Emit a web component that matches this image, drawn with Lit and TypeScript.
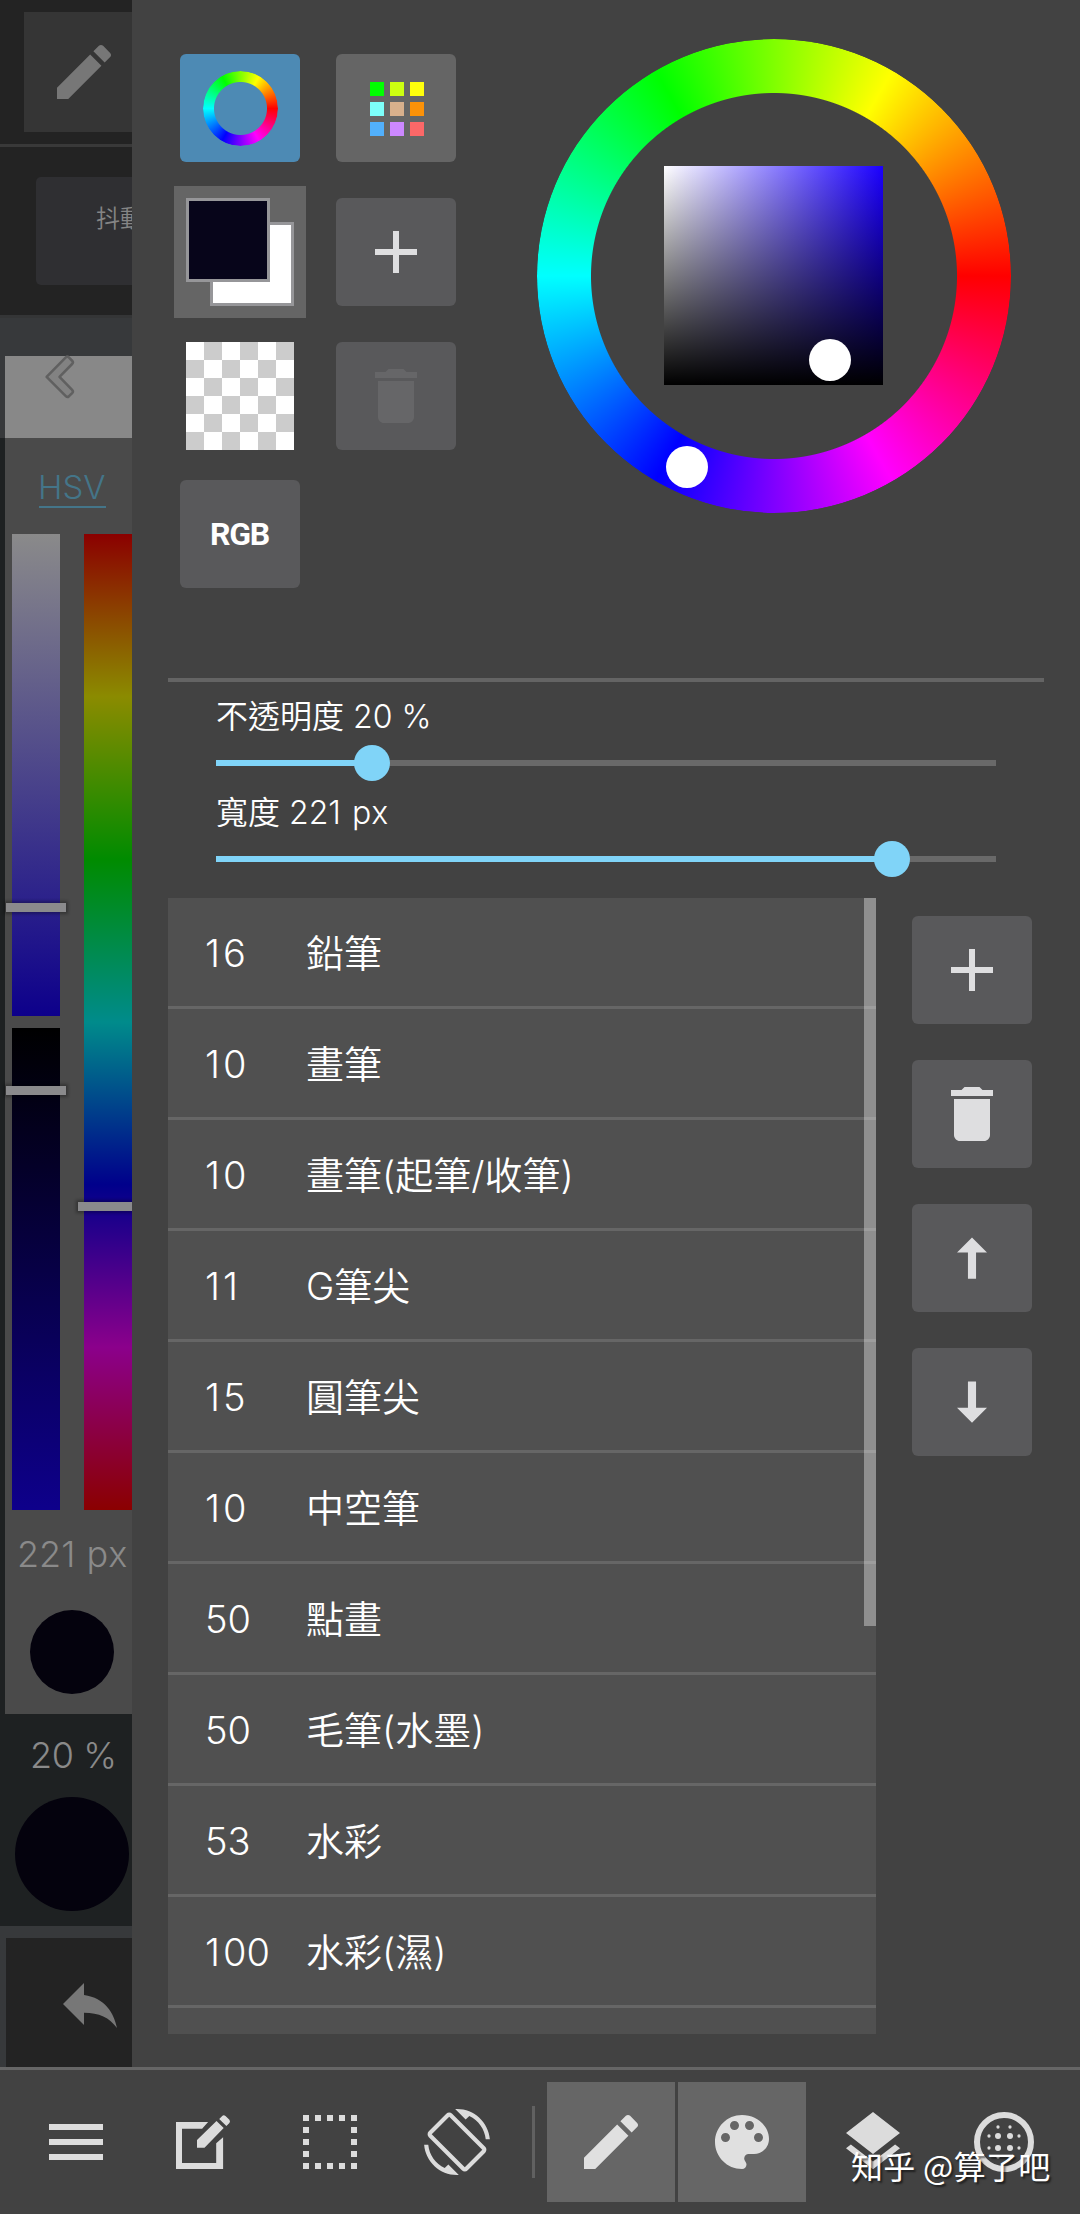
import { LitElement, html, css, svg } from "lit";
import { customElement, property } from "lit/decorators.js";
import { classMap } from "lit/directives/class-map.js";

const ICONS: Record<string, unknown> = {
  pencil: svg`<path d="M3 17.25V21h3.75L17.81 9.94l-3.75-3.75L3 17.25zM20.71 7.04c.39-.39.39-1.02 0-1.41l-2.34-2.34c-.39-.39-1.02-.39-1.41 0l-1.83 1.83 3.75 3.75 1.83-1.83z"/>`,
  plus: svg`<path d="M19 13h-6v6h-2v-6H5v-2h6V5h2v6h6v2z"/>`,
  trash: svg`<path d="M6 19c0 1.1.9 2 2 2h8c1.1 0 2-.9 2-2V7H6v12zM19 4h-3.5l-1-1h-5l-1 1H5v2h14V4z"/>`,
  up: svg`<path d="M12 5.2l5 5h-3.65v8.7h-2.7v-8.7H7z"/>`,
  down: svg`<path d="M12 18.9l5-5h-3.65V5.2h-2.7v8.7H7z"/>`,
  undo: svg`<path d="M10 9V5l-7 7 7 7v-4.1c5 0 8.5 1.6 11 5.1-1-5-4-10-11-11z"/>`,
  chevron: svg`<path class="outlined" d="M4.2 12.3L10.6 5.8Q11.1 5.3 11.6 5.8L12.8 7Q13.2 7.5 12.7 8L8.5 12.3L12.7 16.6Q13.2 17.1 12.8 17.6L11.6 18.8Q11.1 19.2 10.6 18.7Z"/>`,
  menu: svg`<path d="M3 18h18v-2H3v2zm0-5h18v-2H3v2zm0-7v2h18V6H3z"/>`,
  compose: svg`<path d="M13.7 5.3H3V21h15.7V10.4l-2.3 2V19H5V7.6h6.7zM10 13.9v-2.6L16.5 5l2.4 2.3-6.4 6.6zM17.4 4.3l1-1q.5-.5 1.1 0l1.3 1.3q.4.6 0 1.1l-1 1z"/>`,
  select: svg`<path d="M3 3h2v2H3zM7 3h2v2H7zM11 3h2v2h-2zM15 3h2v2h-2zM19 3h2v2h-2zM3 7h2v2H3zM19 7h2v2h-2zM3 11h2v2H3zM19 11h2v2h-2zM3 15h2v2H3zM19 15h2v2h-2zM3 19h2v2H3zM7 19h2v2H7zM11 19h2v2h-2zM15 19h2v2h-2zM19 19h2v2h-2z"/>`,
  rotate: svg`<path transform="translate(1 1) scale(.9167)" d="M16.48 2.52c3.27 1.55 5.61 4.72 5.97 8.48h1.5C23.44 4.84 18.29 0 12 0l-.66.03 3.81 3.81 1.33-1.32zm-6.25-.77c-.59-.59-1.54-.59-2.12 0L1.75 8.11c-.59.59-.59 1.54 0 2.12l12.02 12.02c.59.59 1.54.59 2.12 0l6.36-6.36c.59-.59.59-1.54 0-2.12L10.23 1.75zm4.6 19.44L2.81 9.17l6.36-6.36 12.02 12.02-6.36 6.36zm-7.31.29C4.25 19.94 1.91 16.76 1.55 13H.05C.56 19.16 5.71 24 12 24l.66-.03-3.81-3.81-1.33 1.32z"/>`,
  palette: svg`<path d="M12 3c-4.97 0-9 4.03-9 9s4.03 9 9 9c.83 0 1.5-.67 1.5-1.5 0-.39-.15-.74-.39-1.01-.23-.26-.38-.61-.38-.99 0-.83.67-1.5 1.5-1.5H16c2.76 0 5-2.24 5-5 0-4.42-4.03-8-9-8zm-5.5 9c-.83 0-1.5-.67-1.5-1.5S5.67 9 6.5 9 8 9.67 8 10.5 7.33 12 6.5 12zm3-4C8.67 8 8 7.33 8 6.5S8.67 5 9.5 5s1.5.67 1.5 1.5S10.33 8 9.5 8zm5 0c-.83 0-1.5-.67-1.5-1.5S13.67 5 14.5 5s1.5.67 1.5 1.5S15.33 8 14.5 8zm3 4c-.83 0-1.5-.67-1.5-1.5S16.67 9 17.5 9s1.5.67 1.5 1.5-.67 1.5-1.5 1.5z"/>`,
  layers: svg`<path d="M11.99 18.54l-7.37-5.73L3 14.07l9 7 9-7-1.63-1.27-7.38 5.74zM12 16l7.36-5.73L21 9l-9-7-9 7 1.63 1.27L12 16z"/>`,
  material: svg`<circle class="ring" cx="12" cy="12" r="9"/>
    <circle cx="10" cy="10" r="1"/><circle cx="14" cy="10" r="1"/><circle cx="10" cy="14" r="1"/><circle cx="14" cy="14" r="1"/>
    <circle cx="7" cy="10" r=".55"/><circle cx="7" cy="14" r=".55"/><circle cx="17" cy="10" r=".55"/><circle cx="17" cy="14" r=".55"/>
    <circle cx="10" cy="7" r=".55"/><circle cx="14" cy="7" r=".55"/><circle cx="10" cy="17" r=".55"/><circle cx="14" cy="17" r=".55"/>`,
};

/** Gives the narrow digit 1 extra room so it is spaced like its neighbours. */
const spaced = (text: string) =>
  text.split(/(1)/).filter(Boolean).map((part) => (part === "1" ? html`<span class="one">1</span>` : part));

@customElement("ui-icon")
class UiIcon extends LitElement {
  @property() name = "";
  static styles = css`
    :host { display: block; width: 72px; height: 72px; flex: none; }
    svg { display: block; width: 100%; height: 100%; fill: currentColor; overflow: visible; }
    .outlined { fill: #828282; stroke: #606060; stroke-width: 0.85; stroke-linejoin: round; }
    .ring { fill: none; stroke: currentColor; stroke-width: 2; }
  `;
  render() {
    return html`<svg viewBox="0 0 24 24">${ICONS[this.name]}</svg>`;
  }
}

@customElement("value-slider")
class ValueSlider extends LitElement {
  @property() label = "";
  @property({ type: Number }) percent = 0;
  static styles = css`
    :host { display: flex; flex-direction: column; height: 96px; }
    .label {
      height: 66px; color: #fff; white-space: nowrap; padding-top: 2px; box-sizing: border-box;
      font: 350 32px/66px Inter, "Noto Sans CJK TC", sans-serif; font-kerning: none;
    }
    .one { letter-spacing: 2px; }
    .track { position: relative; height: 6px; margin-top: 12px; background: #696969; }
    .fill { height: 6px; background: #80d4f8; }
    .thumb {
      position: absolute; top: -15px; width: 36px; height: 36px; margin-left: -18px;
      border-radius: 50%; background: #80d4f8;
    }
  `;
  render() {
    return html`
      <div class="label">${spaced(this.label)}</div>
      <div class="track">
        <div class="fill" style="width:${this.percent}%"></div>
        <div class="thumb" style="left:${this.percent}%"></div>
      </div>`;
  }
}

@customElement("color-wheel")
class ColorWheel extends LitElement {
  static styles = css`
    :host { display: block; }
    .wheel { position: relative; width: 474px; height: 474px; display: grid; place-items: center; }
    .hue {
      position: absolute; inset: 0; border-radius: 50%;
      background: conic-gradient(from 90deg, #f00, #f0f, #00f, #0ff, #0f0, #ff0, #f00);
      -webkit-mask: radial-gradient(circle closest-side, transparent 182.5px, #000 183.5px);
      mask: radial-gradient(circle closest-side, transparent 182.5px, #000 183.5px);
    }
    .square {
      width: 219px; height: 219px; margin: 0 1px 1px 0;
      background: linear-gradient(to bottom, transparent, #000), linear-gradient(to right, #fff, #1b00ff);
    }
    .knob { position: absolute; width: 42px; height: 42px; border-radius: 50%; background: #fff; }
    .knob-sv { left: 272px; top: 300px; }
    .knob-hue { left: 129px; top: 407px; }
  `;
  render() {
    return html`<div class="wheel">
      <div class="hue"></div>
      <div class="square"></div>
      <div class="knob knob-sv"></div>
      <div class="knob knob-hue"></div>
    </div>`;
  }
}

@customElement("app-root")
class AppRoot extends LitElement {
  private swatches = ["#00ff00", "#ccff11", "#ffff0c", "#7dfffa", "#d8b08c", "#fc9208", "#52b0fc", "#cc88ff", "#fc6868"];
  private brushes: [number, string][] = [
    [16, "鉛筆"], [10, "畫筆"], [10, "畫筆(起筆/收筆)"], [11, "G筆尖"], [15, "圓筆尖"],
    [10, "中空筆"], [50, "點畫"], [50, "毛筆(水墨)"], [53, "水彩"], [100, "水彩(濕)"],
  ];
  private tools = ["menu", "compose", "select", "rotate"];
  private panels = [
    { icon: "pencil", on: true }, { icon: "palette", on: true },
    { icon: "layers", on: false }, { icon: "material", on: false },
  ];

  static styles = css`
    :host {
      display: flex; flex-direction: column; width: 1080px; height: 2214px; overflow: hidden;
      position: relative; background: #424242; color: #fff;
      font-family: Inter, "Noto Sans CJK TC", sans-serif; font-weight: 350; font-kerning: none;
    }
    * { box-sizing: border-box; }
    .main { display: flex; height: 2067px; flex: none; }

    .canvas { width: 132px; flex: none; overflow: hidden; background: #37393b; display: flex; flex-direction: column; }
    .tool-row { height: 144px; background: #232323; padding: 12px 0 0 24px; flex: none; }
    .tool { width: 120px; height: 120px; background: #353535; color: #777; display: grid; place-items: center; }
    .option-row { height: 174px; flex: none; background: #232323; border-top: 3px solid #393939; border-bottom: 3px solid #343536; padding: 30px 0 0 36px; }
    .option { width: 168px; height: 108px; border-radius: 5px; background: #2f2f32; color: #858585; font-size: 24px; line-height: 83px; padding-left: 60px; white-space: nowrap; }
    .fold { height: 82px; flex: none; margin: 38px 0 0 5px; background: #888; }
    .fold ui-icon { margin: -16px 0 0 29px; }
    .side { height: 1276px; flex: none; background: #4a4a4a; border-left: 5px solid #1e2122; display: flex; flex-direction: column; }
    .mode { align-self: flex-start; margin: 27px 0 0 34px; width: 67px; height: 43px; line-height: 45px; font-size: 33px; color: #447589; border-bottom: 2px solid #447589; white-space: nowrap; text-indent: -1px; }
    .bars { display: flex; gap: 24px; margin: 26px 0 0 7px; height: 976px; flex: none; }
    .sv { display: flex; flex-direction: column; gap: 12px; }
    .bar { width: 48px; position: relative; }
    .bar-s { height: 482px; background: linear-gradient(#8a8a8a, #0d008b); }
    .bar-v { height: 482px; background: linear-gradient(#000, #0e008b); }
    .bar-h { height: 976px; flex: none; background: linear-gradient(#8b0000, #8b8b00, #008b00, #008b8b, #00008b, #8b008b, #8b0000); }
    .grip { position: absolute; left: -6px; width: 60px; height: 9px; background: #8a8a8c; box-shadow: 0 0 3px 2px rgba(0, 0, 0, 0.3); }
    .grip-s { top: 369px; }
    .grip-v { top: 58px; }
    .grip-h { top: 668px; }
    .reading { font-size: 36px; line-height: 44px; color: #8a8a8a; white-space: nowrap; }
    .reading .one { letter-spacing: 1px; }
    .size { margin: 22px 0 0 12px; }
    .dot { border-radius: 50%; background: #04020d; }
    .dot-size { width: 84px; height: 84px; margin: 34px 0 0 25px; }
    .opacity { height: 212px; flex: none; background: #1e2122; padding: 19px 0 0 15px; }
    .opacity .reading { padding-left: 15px; letter-spacing: -0.4px; }
    .dot-opacity { width: 114px; height: 114px; margin-top: 20px; }
    .undo { margin: 12px 0 0 6px; height: 129px; flex: none; background: #232323; color: #777; padding: 30px 0 0 48px; }

    .panel { flex: 1; background: #424242; padding: 39px 36px 0; }
    .color { display: flex; height: 639px; }
    .keys { display: grid; grid-template-columns: 132px 120px; column-gap: 30px; grid-template-rows: 108px 132px 108px 108px; align-content: start; padding: 15px 0 0 6px; width: 369px; flex: none; row-gap: 24px; }
    .keys > * { justify-self: center; align-self: center; }
    .btn { width: 120px; height: 108px; border-radius: 6px; background: #59595b; color: #dedee0; display: grid; place-items: center; flex: none; }
    .btn.active { background: #4d8ab4; }
    .btn.light { background: #656565; }
    .btn.off { color: #666668; }
    .btn.rgb { font: 700 32px Roboto, sans-serif; letter-spacing: -1.2px; color: #fff; align-self: end; margin-bottom: -6px; padding-right: 1px; }
    .mini-wheel {
      width: 75px; height: 75px; border-radius: 50%;
      background: conic-gradient(from 90deg, #f00, #f0f, #00f, #0ff, #0f0, #ff0, #f00);
      -webkit-mask: radial-gradient(circle closest-side, transparent 26px, #000 27px);
      mask: radial-gradient(circle closest-side, transparent 26px, #000 27px);
    }
    .grid9 { display: grid; grid-template-columns: repeat(3, 14px); grid-auto-rows: 14px; gap: 6px; margin: 2px 0 0 2px; }
    .pair { position: relative; width: 132px; height: 132px; background: #656565; }
    .chip { position: absolute; width: 84px; height: 84px; border: 3px solid #969699; }
    .chip-back { left: 36px; top: 36px; background: #fff; }
    .chip-front { left: 12px; top: 12px; background: #07051a; }
    .clear { width: 108px; height: 108px; background: repeating-conic-gradient(#ccc 0 25%, #fff 0 50%) 0 0 / 36px 36px; }
    .sliders { border-top: 4px solid #646464; padding: 0 48px; height: 220px; }
    .lower { display: flex; gap: 36px; }
    .list { width: 708px; height: 1136px; position: relative; overflow: hidden; background: #505050; flex: none; }
    .row { height: 111px; padding-top: 2px; border-bottom: 3px solid #666; display: flex; align-items: center; font-size: 38px; line-height: 56px; white-space: nowrap; }
    .num { width: 138px; padding-left: 37px; }
    .num .one { letter-spacing: 3px; }
    .scroll { position: absolute; right: 0; top: 0; width: 12px; height: 728px; background: rgba(255, 255, 255, 0.36); }
    .actions { display: flex; flex-direction: column; gap: 36px; padding-top: 18px; }

    .bottom { height: 147px; flex: none; border-top: 3px solid #666; background: #424242; display: flex; gap: 3px; padding: 12px 0 0 14px; color: #dcdcdc; }
    .slot { width: 124px; height: 120px; display: grid; place-items: center; flex: none; }
    .slot.wide { width: 128px; }
    .slot.on { background: #666; color: #e0e0e0; }
    .sep { width: 3px; height: 72px; margin: 24px 9px 0 10px; background: #616161; }
    .mark { position: absolute; left: 851px; top: 2141px; font: 400 32px/48px "Noto Sans CJK SC", sans-serif; letter-spacing: 0.3px; color: #fff; white-space: nowrap; text-shadow: 2px 2px 2px rgba(0, 0, 0, 0.55); }
  `;

  render() {
    return html`
      <div class="main">
        <div class="canvas">
          <div class="tool-row"><div class="tool"><ui-icon name="pencil"></ui-icon></div></div>
          <div class="option-row"><div class="option">抖動</div></div>
          <div class="fold"><ui-icon name="chevron"></ui-icon></div>
          <div class="side">
            <div class="mode">HSV</div>
            <div class="bars">
              <div class="sv">
                <div class="bar bar-s"><div class="grip grip-s"></div></div>
                <div class="bar bar-v"><div class="grip grip-v"></div></div>
              </div>
              <div class="bar bar-h"><div class="grip grip-h"></div></div>
            </div>
            <div class="reading size">${spaced("221 px")}</div>
            <div class="dot dot-size"></div>
          </div>
          <div class="opacity">
            <div class="reading">20 %</div>
            <div class="dot dot-opacity"></div>
          </div>
          <div class="undo"><ui-icon name="undo"></ui-icon></div>
        </div>

        <div class="panel">
          <div class="color">
            <div class="keys">
              <div class="btn active"><div class="mini-wheel"></div></div>
              <div class="btn light">
                <div class="grid9">${this.swatches.map((c) => html`<div style="background:${c}"></div>`)}</div>
              </div>
              <div class="pair"><div class="chip chip-back"></div><div class="chip chip-front"></div></div>
              <div class="btn"><ui-icon name="plus"></ui-icon></div>
              <div class="clear"></div>
              <div class="btn off"><ui-icon name="trash"></ui-icon></div>
              <div class="btn rgb">RGB</div>
            </div>
            <color-wheel></color-wheel>
          </div>
          <div class="sliders">
            <value-slider label="不透明度 20 %" percent="20"></value-slider>
            <value-slider label="寬度 221 px" percent="86.7"></value-slider>
          </div>
          <div class="lower">
            <div class="list">
              ${this.brushes.map(([n, name]) => html`<div class="row"><div class="num">${spaced(String(n))}</div><div>${name}</div></div>`)}
              <div class="scroll"></div>
            </div>
            <div class="actions">
              ${["plus", "trash", "up", "down"].map((i) => html`<div class="btn"><ui-icon name=${i}></ui-icon></div>`)}
            </div>
          </div>
        </div>
      </div>

      <div class="bottom">
        ${this.tools.map((i) => html`<div class="slot"><ui-icon name=${i}></ui-icon></div>`)}
        <div class="sep"></div>
        ${this.panels.map((p) => html`<div class=${classMap({ slot: true, wide: true, on: p.on })}><ui-icon name=${p.icon}></ui-icon></div>`)}
      </div>
      <div class="mark">知乎 @算了吧</div>
    `;
  }
}
